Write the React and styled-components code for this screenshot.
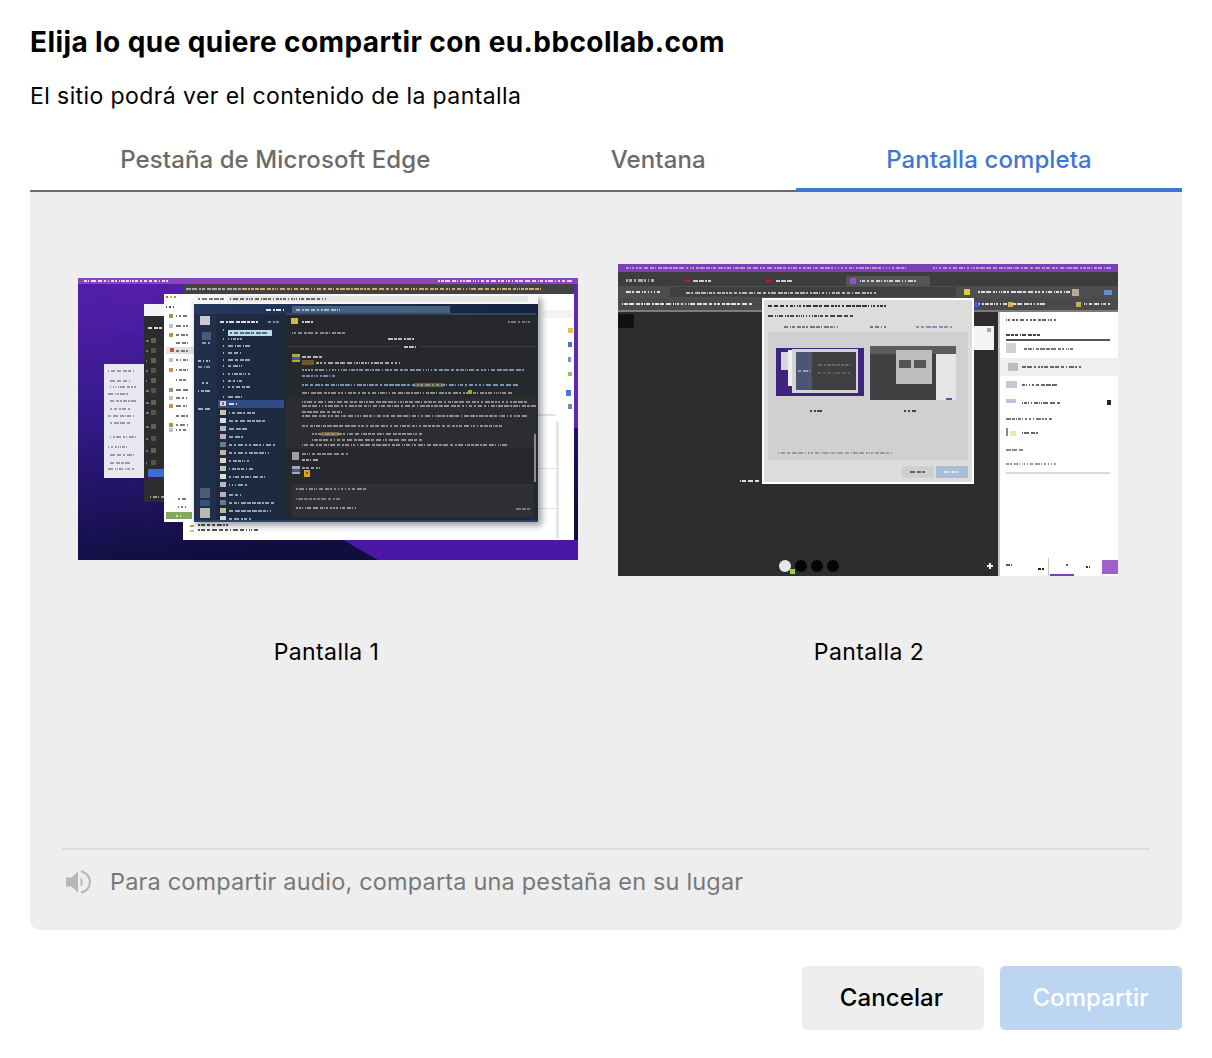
import React from "react";
import styled, { createGlobalStyle } from "styled-components";

const Global = createGlobalStyle`
  html, body { margin: 0; padding: 0; background: #fff; }
  body { font-family: Inter, "Liberation Sans", sans-serif; color: #000; }
`;

const Dialog = styled.div`
  width: 1212px; height: 1058px; box-sizing: border-box; padding: 0 30px;
  display: flex; flex-direction: column;
`;
const Title = styled.h1`
  margin: 0; padding-top: 25px; height: 58px; box-sizing: border-box;
  font-size: 28px; letter-spacing: 0.41px; line-height: 34px; font-weight: 700; white-space: nowrap;
`;
const Subtitle = styled.p`
  margin: 0; padding-top: 23px; height: 72px; box-sizing: border-box;
  font-size: 23px; letter-spacing: 0.41px; line-height: 30px; font-weight: 400; white-space: nowrap;
`;
const Tabs = styled.div`
  display: flex; height: 62px; box-sizing: border-box;
  border-bottom: 2px solid #6b6b6b;
`;
const Tab = styled.div`
  padding: 0 90px; flex: 1 1 auto; text-align: center; white-space: nowrap;
  font-size: 24px; letter-spacing: 0.1px; line-height: 60px; font-weight: 500; height: 62px; box-sizing: border-box;
  color: ${p => (p.$active ? "#3f76d2" : "#6a6a6a")};
  border-bottom: ${p => (p.$active ? "4px solid #3f76d2" : "none")};
`;
const Panel = styled.div`
  height: 738px; background: #eeeeee; border-radius: 0 0 10px 10px;
  display: flex; flex-direction: column; padding: 0 32px;
`;
const Sources = styled.div`
  display: flex; gap: 40px; padding: 72px 0 0 16px; height: 656px; box-sizing: border-box;
`;
const Source = styled.div`
  width: 500px; display: flex; flex-direction: column; align-items: center;
`;
const ThumbSlot = styled.div`
  height: 312px; width: 500px; box-sizing: border-box; display: flex; align-items: center; justify-content: center;
  padding-bottom: ${p => (p.$nudge ? "2px" : "0")};
  svg { display: block; }
`;
const SourceLabel = styled.div`
  margin-top: 61px; font-size: 23px; letter-spacing: 0.4px; line-height: 30px;
  padding-right: ${p => (p.$first ? "3px" : "0")};
  padding-left: ${p => (p.$first ? "0" : "2px")};
`;
const AudioRow = styled.div`
  border-top: 2px solid #dcdcdc; flex: 1; display: flex; align-items: flex-start; gap: 19px;
  padding: 17px 0 0 3px;
  font-size: 23.5px; letter-spacing: 0.17px; line-height: 30px; color: #787878; white-space: nowrap;
  svg { flex: none; margin-top: 2px; }
`;
const Footer = styled.div`
  display: flex; justify-content: flex-end; gap: 16px; padding-top: 36px;
`;
const Button = styled.button`
  width: 182px; height: 64px; border: none; border-radius: 5px;
  font-family: inherit; font-size: 24px; letter-spacing: 0.1px; font-weight: 500;
  padding: 0 ${p => (p.$primary ? "1px" : "3px")} 2px 0;
  background: ${p => (p.$primary ? "#bcd6f2" : "#eeeeee")};
  color: ${p => (p.$primary ? "#ffffff" : "#000000")};
`;
const DashGroup = styled.g`
  filter: blur(0.6px);
`;
const WindowShadow = styled.rect`
  filter: blur(3px);
`;

/* Deterministic pseudo-random rows of pixel dashes: the illegible text of a downscaled capture */
function dashes(x, y, w, seed, h = 2) {
  const out = [];
  let s = seed * 7919 + 13;
  let cx = x;
  while (cx < x + w) {
    s = (s * 1103515245 + 12345) & 0x7fffffff;
    const len = 1 + (s >> 8) % 5;
    const gap = 1 + (s >> 16) % 2;
    out.push([cx, y, Math.min(len, x + w - cx), h]);
    cx += len + gap;
  }
  return out;
}
const Dash = ({ x, y, w, seed = 1, fill, h }) => (
  <DashGroup fill={fill}>
    {dashes(x, y, w, seed, h).map((r, i) => (
      <rect key={i} x={r[0]} y={r[1]} width={r[2]} height={r[3]} />
    ))}
  </DashGroup>
);

const ThumbOne = () => (
  <svg width="500" height="282" viewBox="0 0 500 282" shapeRendering="crispEdges">
    <defs>
      <linearGradient id="wall" x1="0" y1="0" x2="0.25" y2="1">
        <stop offset="0" stopColor="#5a1eae" />
        <stop offset="0.45" stopColor="#351a8c" />
        <stop offset="1" stopColor="#0f0e3e" />
      </linearGradient>
      <linearGradient id="nav" x1="0" y1="0" x2="1" y2="0">
        <stop offset="0" stopColor="#253a5e" />
        <stop offset="1" stopColor="#15223f" />
      </linearGradient>
    </defs>
    <rect width="500" height="282" fill="url(#wall)" />
    <polygon points="265,262 500,262 500,282 300,282" fill="#4a18a4" shapeRendering="auto" />
    <polygon points="0,6 28,6 70,60 0,40" fill="#4b1fa8" opacity="0.7" shapeRendering="auto" />
    <polygon points="470,0 500,0 500,150 470,150" fill="#5a2ab4" />
    <rect width="500" height="6" fill="#8c45b8" />
    <Dash x={6} y={2} w={86} seed={3} fill="#e8d8f4" />
    <Dash x={360} y={2} w={136} seed={5} fill="#e4d4f0" />

    {/* window at the back */}
    <rect x="105" y="6" width="391" height="256" fill="#ffffff" />
    <rect x="105" y="6" width="391" height="10" fill="#434345" />
    <Dash x={108} y={10} w={60} seed={8} fill="#aaa" />
    <Dash x={165} y={10} w={300} seed={9} fill="#c9b070" />
    <rect x="465" y="32" width="30" height="8" fill="#f3f3f3" />
    <rect x="490" y="50" width="5" height="5" fill="#e5c04c" />
    <rect x="490" y="64" width="4" height="5" fill="#4b72c8" />
    <rect x="490" y="79" width="3" height="5" fill="#7c8ed8" />
    <rect x="490" y="94" width="4" height="4" fill="#a8b860" />
    <rect x="488" y="112" width="5" height="6" fill="#4a7ad8" />
    <rect x="490" y="126" width="4" height="5" fill="#6c84c8" />
    <rect x="478" y="144" width="3" height="116" fill="#e6e6e6" />
    <rect x="460" y="136" width="18" height="2" fill="#e2e2e2" />
    <rect x="460" y="190" width="18" height="1" fill="#e2e2e2" />
    <rect x="460" y="230" width="18" height="1" fill="#e2e2e2" />
    <rect x="112" y="247" width="4" height="2" fill="#a8b040" />
    <rect x="112" y="252" width="4" height="2" fill="#c8c870" />
    <Dash x={120} y={246} w={30} seed={11} fill="#555" />
    <Dash x={120} y={251} w={60} seed={12} fill="#555" />

    {/* light panel */}
    <rect x="26" y="86" width="44" height="114" fill="#e8e8f1" />
    {[92, 102, 108, 115, 122, 130, 137, 144, 158, 168, 176, 184, 190].map((y, i) => (
      <Dash key={y} x={i % 3 ? 32 : 30} y={y} w={i % 2 ? 20 : 26} seed={20 + i} fill="#9a9aa8" />
    ))}

    {/* dark window */}
    <rect x="66" y="26" width="42" height="198" fill="#2c2c2f" />
    <rect x="66" y="26" width="24" height="12" fill="#f4f4f4" />
    <Dash x={70} y={49} w={14} seed={31} fill="#ddd" />
    {[60, 70, 80, 90, 100, 110, 122, 132, 146, 158, 170, 182].map((y, i) => (
      <g key={y}>
        <rect x="73" y={y} width="5" height="5" fill={i % 2 ? "#4d5a3c" : "#55684a"} />
        <Dash x={68} y={y + 2} w={3} seed={40 + i} fill="#777" />
      </g>
    ))}
    <rect x="70" y="191" width="16" height="8" fill="#3f6bd8" />
    <Dash x={72} y={218} w={14} seed={44} fill="#999" />

    {/* white sidebar window */}
    <rect x="86" y="16" width="32" height="228" fill="#ffffff" />
    <rect x="88" y="18" width="2" height="2" fill="#e0513b" />
    <rect x="92" y="18" width="2" height="2" fill="#e6b93a" />
    <rect x="96" y="18" width="2" height="2" fill="#5fb24a" />
    <Dash x={88} y={28} w={8} seed={51} fill="#555" />
    {[36, 46, 55, 63, 72, 80, 90, 100, 110, 118, 126, 136, 145, 150].map((y, i) => (
      <g key={y}>
        {i % 4 !== 3 && <rect x="91" y={y} width="4" height="4" fill={["#8aa060", "#c0c0c8", "#c89050", "#909090"][i % 4]} />}
        <Dash x={98} y={y + 1} w={12} seed={60 + i} fill="#777" />
      </g>
    ))}
    <rect x="88" y="69" width="28" height="7" fill="#e3e3e3" />
    <rect x="92" y="70" width="4" height="4" fill="#c9533c" />
    <Dash x={98} y={72} w={12} seed={71} fill="#777" />
    <Dash x={100} y={220} w={8} seed={72} fill="#777" />
    <Dash x={100} y={228} w={8} seed={73} fill="#777" />
    <rect x="88" y="234" width="26" height="7" fill="#86a85c" />
    <Dash x={98} y={237} w={6} seed={74} fill="#d7e4c4" />

    {/* main app window */}
    <WindowShadow x="118" y="20" width="346" height="228" fill="#000" opacity="0.35" />
    <rect x="116" y="16" width="344" height="228" fill="#1f2a3f" />
    <rect x="116" y="16" width="344" height="10" fill="#f7f7f7" />
    <rect x="150" y="18" width="300" height="6" fill="#e6e6e6" />
    <Dash x={120} y={20} w={26} seed={81} fill="#777" />
    <Dash x={152} y={20} w={96} seed={82} fill="#666" />
    <rect x="116" y="26" width="344" height="10" fill="url(#nav)" />
    <rect x="214" y="28" width="158" height="8" fill="#48607f" />
    <Dash x={218} y={31} w={44} seed={83} fill="#a7b7cc" />
    <Dash x={188} y={31} w={18} seed={84} fill="#dce4ee" />

    {/* rail */}
    <rect x="116" y="36" width="22" height="206" fill="#222f4b" />
    <rect x="122" y="38" width="10" height="9" fill="#c9c9d4" />
    <rect x="124" y="54" width="9" height="8" fill="#465c7a" />
    <Dash x={124} y={64} w={8} seed={85} fill="#8f9cb0" />
    <Dash x={120} y={82} w={12} seed={86} fill="#a8b6cc" />
    <Dash x={120} y={88} w={12} seed={87} fill="#7f8da6" />
    <Dash x={124} y={104} w={6} seed={88} fill="#9fb0c6" />
    <Dash x={120} y={112} w={12} seed={89} fill="#a3aec0" />
    <Dash x={120} y={130} w={14} seed={90} fill="#a3aec0" />
    <rect x="122" y="210" width="10" height="10" fill="#4c5c76" />
    <rect x="122" y="222" width="10" height="6" fill="#3b5078" />
    <rect x="122" y="230" width="10" height="10" fill="#b9b9b0" />

    {/* channel list */}
    <rect x="138" y="36" width="70" height="206" fill="#1e2a40" />
    <Dash x={142} y={43} w={38} seed={101} fill="#d7dce6" />
    <Dash x={190} y={43} w={12} seed={102} fill="#7b8aa0" />
    <rect x="150" y="52" width="44" height="6" fill="#bcdcec" />
    <Dash x={152} y={54} w={38} seed={103} fill="#4c6a80" />
    {[51, 60, 67, 74, 81, 87, 95, 102, 108, 118].map((y, i) => (
      <g key={y}>
        <rect x="145" y={y} width="1" height="2" fill="#a8b2c2" />
        {y !== 51 && <Dash x={150} y={y} w={i % 2 ? 14 : 22} seed={104 + i} fill="#97a3b8" />}
      </g>
    ))}
    <rect x="140" y="122" width="66" height="8" fill="#2f4c86" />
    <rect x="142" y="123" width="6" height="5" fill="#d7d4d8" />
    <rect x="144" y="124" width="2" height="3" fill="#a84a5a" />
    <Dash x={151} y={125} w={8} seed={115} fill="#d8e0f0" />
    {[132, 140, 148, 156, 164, 172, 180, 188, 196, 204, 214, 222, 230, 238].map((y, i) => (
      <g key={y}>
        <rect x="142" y={y} width="6" height="5" fill={["#c8c4b0", "#dcdce0", "#b7b9c4", "#d0a8b0", "#6a7a90", "#c8b890", "#d4d4d0"][i % 7]} />
        <Dash x={151} y={y + 2} w={[26, 36, 18, 14, 46, 42, 22][i % 7]} seed={120 + i} fill="#95a1b6" />
      </g>
    ))}

    {/* chat */}
    <rect x="208" y="36" width="250" height="206" fill="#27282b" />
    <rect x="208" y="35" width="250" height="2" fill="#33445e" />
    <rect x="213" y="40" width="7" height="6" fill="#cdb850" />
    <Dash x={224} y={43} w={12} seed={141} fill="#c6c6c6" />
    <Dash x={430} y={43} w={22} seed={142} fill="#777" />
    <Dash x={214} y={54} w={54} seed={143} fill="#8a8a8a" />
    <Dash x={310} y={60} w={26} seed={144} fill="#bdbdbd" />
    <rect x="208" y="68" width="112" height="1" fill="#3b3c40" />
    <rect x="342" y="68" width="116" height="1" fill="#3b3c40" />
    <Dash x={326} y={68} w={12} seed={145} fill="#bdbdbd" />
    <rect x="214" y="76" width="8" height="8" fill="#b9a44e" />
    <rect x="214" y="79" width="8" height="3" fill="#3c5aa8" />
    <Dash x={224} y={78} w={20} seed={146} fill="#b5b5b5" />
    <rect x="224" y="82" width="12" height="5" fill="#6d5a2a" />
    <Dash x={238} y={84} w={84} seed={147} fill="#a9a9a9" />
    <Dash x={224} y={91} w={222} seed={148} fill="#7f8ea8" />
    <Dash x={224} y={97} w={34} seed={149} fill="#6f8ab4" />
    <rect x="336" y="105" width="30" height="4" fill="#6a5a2a" />
    <Dash x={224} y={106} w={216} seed={150} fill="#7a93bc" />
    <Dash x={224} y={114} w={210} seed={151} fill="#8c8c8c" />
    <rect x="390" y="112" width="4" height="4" fill="#86b040" />
    <rect x="208" y="119" width="250" height="51" fill="#2c2d30" />
    <rect x="243" y="154" width="18" height="4" fill="#7a6430" />
    {[[123, 226], [127, 236], [133, 40], [137, 226], [147, 200], [155, 110], [161, 110], [166, 206]].map(([y, w], i) => (
      <Dash key={y} x={i === 5 || i === 6 ? 234 : 224} y={y} w={w} seed={152 + i} fill="#8e8e8e" />
    ))}
    <rect x="214" y="174" width="7" height="8" fill="#9f9f9f" />
    <Dash x={224} y={175} w={46} seed={161} fill="#8a8a8a" />
    <Dash x={224} y={181} w={18} seed={162} fill="#a8a8a8" />
    <rect x="214" y="188" width="8" height="8" fill="#a5a5b5" />
    <rect x="214" y="191" width="8" height="3" fill="#3c5aa8" />
    <Dash x={224} y={189} w={18} seed={163} fill="#9a9a9a" />
    <rect x="226" y="192" width="6" height="7" fill="#d8a430" />
    <rect x="228" y="194" width="2" height="2" fill="#b8382c" />
    <rect x="214" y="206" width="242" height="33" fill="#2f3033" />
    <Dash x={218} y={210} w={70} seed={164} fill="#8a8a8a" />
    <Dash x={218} y={220} w={44} seed={165} fill="#777" />
    <Dash x={218} y={229} w={60} seed={166} fill="#999" />
    <Dash x={438} y={230} w={14} seed={167} fill="#777" />
    <rect x="456" y="156" width="2" height="48" fill="#8d8d8d" />
    <rect x="116" y="242" width="344" height="2" fill="#2b4268" />
  </svg>
);

const ThumbTwo = () => (
  <svg width="500" height="312" viewBox="0 0 500 312" shapeRendering="crispEdges">
    <rect width="500" height="312" fill="#2d2d2d" />
    <rect width="500" height="8" fill="#7d3fb4" />
    <Dash x={8} y={3} w={280} seed={201} fill="#b694d6" />
    <Dash x={315} y={3} w={180} seed={202} fill="#b694d6" />
    <rect y="8" width="500" height="14" fill="#3d3d3f" />
    <rect x="228" y="12" width="84" height="10" fill="#555557" />
    <rect x="232" y="14" width="6" height="6" fill="#8e58c6" />
    <Dash x={242} y={16} w={56} seed={203} fill="#d0d0d0" />
    <rect x="66" y="16" width="6" height="2" fill="#c8181c" />
    <rect x="148" y="16" width="6" height="2" fill="#c8181c" />
    <Dash x={8} y={15} w={28} seed={204} fill="#aaa" h={3} />
    <Dash x={75} y={16} w={18} seed={205} fill="#ccc" />
    <Dash x={158} y={16} w={16} seed={206} fill="#ccc" />
    <rect y="22" width="500" height="12" fill="#4e4e50" />
    <rect x="52" y="23" width="286" height="10" fill="#3f3f41" />
    <Dash x={8} y={27} w={34} seed={207} fill="#e0e0e0" />
    <Dash x={68} y={28} w={190} seed={208} fill="#b8b8b8" />
    <rect x="346" y="25" width="6" height="6" fill="#e6c83c" />
    <Dash x={360} y={27} w={100} seed={209} fill="#dedede" />
    <rect x="454" y="25" width="7" height="7" fill="#b8a898" />
    <rect x="486" y="26" width="8" height="5" fill="#5c90d0" />
    <rect y="34" width="500" height="12" fill="#4a4a4c" />
    <Dash x={4} y={39} w={130} seed={210} fill="#e2e2e2" />
    <Dash x={358} y={39} w={70} seed={211} fill="#dcdcdc" />
    <rect x="356" y="38" width="5" height="5" fill="#3f5cc8" />
    <rect x="390" y="38" width="5" height="5" fill="#d8b83c" />
    <rect x="458" y="38" width="5" height="5" fill="#c8b050" />
    <Dash x={466} y={39} w={26} seed={212} fill="#d8d8d8" />
    <rect y="46" width="500" height="2" fill="#7c7c7c" />
    <rect y="50" width="16" height="14" fill="#111" />

    {/* side panel */}
    <rect x="380" y="48" width="120" height="264" fill="#ffffff" />
    <rect x="380" y="48" width="2" height="264" fill="#c6c6c6" />
    <Dash x={388} y={55} w={50} seed={221} fill="#666" />
    <Dash x={388} y={70} w={34} seed={222} fill="#444" />
    <rect x="388" y="75" width="104" height="2" fill="#555" />
    <rect x="388" y="79" width="10" height="10" fill="#cfcfd4" />
    <Dash x={406} y={84} w={50} seed={223} fill="#777" />
    <rect x="382" y="94" width="118" height="18" fill="#efefef" />
    <rect x="390" y="99" width="10" height="8" fill="#bcbcbc" />
    <Dash x={404} y={102} w={60} seed={224} fill="#666" />
    <rect x="388" y="117" width="11" height="7" fill="#c4c8d4" />
    <Dash x={404} y={120} w={36} seed={225} fill="#666" />
    <rect x="388" y="135" width="10" height="4" fill="#c0c0d8" />
    <Dash x={404} y={138} w={38} seed={226} fill="#666" />
    <rect x="489" y="136" width="4" height="5" fill="#222" />
    <Dash x={388} y={154} w={46} seed={227} fill="#777" />
    <rect x="388" y="164" width="2" height="8" fill="#888" />
    <rect x="392" y="167" width="6" height="5" fill="#ece8b0" />
    <Dash x={404} y={168} w={16} seed={228} fill="#666" />
    <Dash x={388} y={185} w={18} seed={229} fill="#888" />
    <Dash x={388} y={199} w={50} seed={230} fill="#999" />
    <rect x="388" y="208" width="104" height="2" fill="#d8d8d8" />
    <rect x="430" y="294" width="1" height="18" fill="#c8c8c8" />
    <rect x="432" y="310" width="24" height="2" fill="#7c3fb4" />
    <rect x="448" y="300" width="2" height="2" fill="#7c3fb4" />
    <rect x="484" y="296" width="16" height="14" fill="#9d62c8" />
    <Dash x={388} y={300} w={6} seed={231} fill="#555" />
    <Dash x={420} y={304} w={6} seed={232} fill="#222" />
    <Dash x={468} y={302} w={5} seed={233} fill="#333" />

    {/* doc fragment and stage labels */}
    <rect x="356" y="62" width="20" height="24" fill="#f4f4f4" />
    <rect x="369" y="64" width="4" height="4" fill="#a8a8a8" />
    <Dash x={122} y={216} w={20} seed={241} fill="#ddd" />

    {/* meeting controls */}
    <circle cx="167" cy="302" r="6" fill="#e6e6e6" shapeRendering="auto" />
    <rect x="172" y="305" width="5" height="5" fill="#9ccf4a" />
    <circle cx="183" cy="302" r="6" fill="#050505" shapeRendering="auto" />
    <circle cx="199" cy="302" r="6" fill="#050505" shapeRendering="auto" />
    <circle cx="215" cy="302" r="6" fill="#050505" shapeRendering="auto" />
    <rect x="369" y="301" width="6" height="2" fill="#f0f0f0" />
    <rect x="371" y="299" width="2" height="6" fill="#f0f0f0" />

    {/* nested dialog */}
    <rect x="144" y="34" width="212" height="186" fill="#ffffff" />
    <rect x="146" y="36" width="208" height="182" fill="#dcdcdc" />
    <Dash x={150} y={41} w={118} seed={251} fill="#333" />
    <Dash x={150} y={51} w={86} seed={252} fill="#444" />
    <Dash x={166} y={62} w={54} seed={253} fill="#777" />
    <Dash x={252} y={62} w={16} seed={254} fill="#777" />
    <Dash x={298} y={62} w={36} seed={255} fill="#7f92c4" />
    <rect x="150" y="68" width="200" height="128" fill="#d0d0d0" />

    {/* nested capture one */}
    <rect x="158" y="84" width="88" height="48" fill="#3c2480" />
    <rect x="163" y="88" width="14" height="18" fill="#d6d6dc" />
    <rect x="170" y="86" width="8" height="36" fill="#eeeeee" />
    <rect x="174" y="85" width="66" height="44" fill="#d4d4d4" />
    <rect x="178" y="88" width="60" height="38" fill="#3f3f42" />
    <rect x="178" y="88" width="16" height="38" fill="#4b5672" />
    <Dash x={180} y={106} w={12} seed={261} fill="#8ea0c4" />
    <Dash x={200} y={100} w={32} seed={262} fill="#666" />
    <Dash x={200} y={108} w={32} seed={263} fill="#5e5e5e" />

    {/* nested capture two */}
    <rect x="252" y="82" width="86" height="54" fill="#414143" />
    <rect x="252" y="82" width="86" height="8" fill="#5c5c5e" />
    <rect x="278" y="86" width="36" height="34" fill="#bdbdbd" />
    <rect x="281" y="96" width="12" height="8" fill="#555" />
    <rect x="296" y="96" width="12" height="8" fill="#555" />
    <rect x="318" y="90" width="20" height="46" fill="#e6e6e6" />
    <rect x="328" y="134" width="6" height="2" fill="#7c3fb4" />

    <Dash x={192} y={146} w={14} seed={271} fill="#444" />
    <Dash x={286} y={146} w={14} seed={272} fill="#444" />
    <Dash x={160} y={188} w={114} seed={273} fill="#9a9a9a" />
    <rect x="284" y="202" width="32" height="12" fill="#cfcfcf" />
    <Dash x={292} y={207} w={16} seed={274} fill="#666" />
    <rect x="318" y="202" width="32" height="12" fill="#abbed8" />
    <Dash x={326} y={207} w={16} seed={275} fill="#dce6f2" />
  </svg>
);

const SpeakerIcon = () => (
  <svg width="26" height="26" viewBox="0 0 26 26">
    <path d="M1 8.5h5.5L13 2.5v21l-6.5-6H1z" fill="#b6b6b6" />
    <path d="M15.5 8.5a5.5 5.5 0 0 1 0 9z" fill="#b6b6b6" />
    <path d="M16 2.2a11 11 0 0 1 0 21.6" fill="none" stroke="#b6b6b6" strokeWidth="2" />
  </svg>
);

export default function App() {
  return (
    <>
      <Global />
      <Dialog>
        <Title>Elija lo que quiere compartir con eu.bbcollab.com</Title>
        <Subtitle>El sitio podrá ver el contenido de la pantalla</Subtitle>
        <Tabs>
          <Tab>Pestaña de Microsoft Edge</Tab>
          <Tab>Ventana</Tab>
          <Tab $active>Pantalla completa</Tab>
        </Tabs>
        <Panel>
          <Sources>
            <Source>
              <ThumbSlot $nudge><ThumbOne /></ThumbSlot>
              <SourceLabel $first>Pantalla 1</SourceLabel>
            </Source>
            <Source>
              <ThumbSlot><ThumbTwo /></ThumbSlot>
              <SourceLabel>Pantalla 2</SourceLabel>
            </Source>
          </Sources>
          <AudioRow>
            <SpeakerIcon />
            <span>Para compartir audio, comparta una pestaña en su lugar</span>
          </AudioRow>
        </Panel>
        <Footer>
          <Button>Cancelar</Button>
          <Button $primary>Compartir</Button>
        </Footer>
      </Dialog>
    </>
  );
}
